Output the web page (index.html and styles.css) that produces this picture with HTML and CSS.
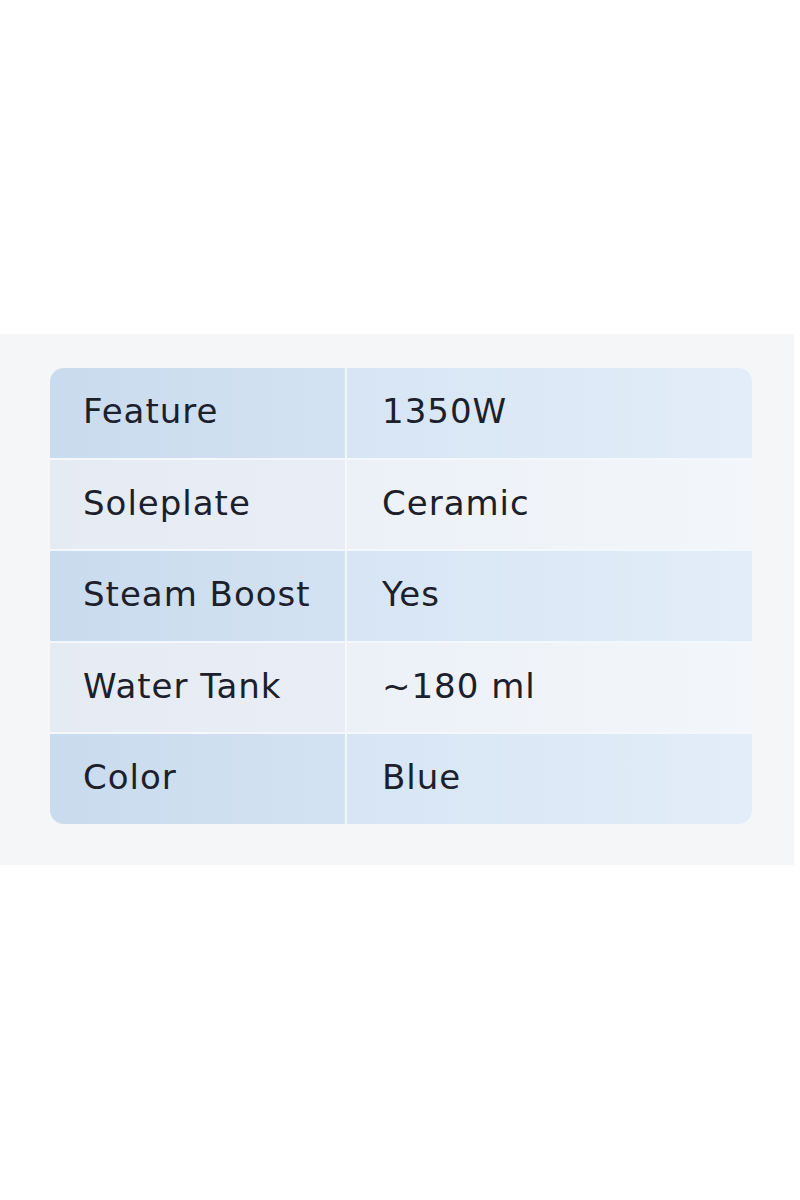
FILE: index.html
```html
<!DOCTYPE html>
<html>
<head>
<meta charset="utf-8">
<link rel="stylesheet" href="styles.css">
</head>
<body>
<div class="page">
  <div class="band">
    <div class="card">
      <div class="row blue"><div class="cell key">Feature</div><div class="cell val">1350W</div></div>
      <div class="row light"><div class="cell key">Soleplate</div><div class="cell val">Ceramic</div></div>
      <div class="row blue"><div class="cell key">Steam Boost</div><div class="cell val">Yes</div></div>
      <div class="row light"><div class="cell key">Water Tank</div><div class="cell val">~180 ml</div></div>
      <div class="row blue"><div class="cell key">Color</div><div class="cell val">Blue</div></div>
    </div>
  </div>
</div>
</body>
</html>
```
FILE: styles.css
```css
html, body {
  margin: 0;
  padding: 0;
  background: #ffffff;
}
.page {
  width: 800px;
  height: 1200px;
  padding-top: 334px;
  box-sizing: border-box;
}
.band {
  width: 794px;
  height: 531px;
  background: #f5f6f8;
  padding: 34px 0 0 50px;
  box-sizing: border-box;
}
.card {
  width: 702px;
  border-radius: 14px;
  overflow: hidden;
  display: flex;
  flex-direction: column;
  gap: 2px;
  background: #f4f7fb;
}
.row {
  display: grid;
  grid-template-columns: 295px 1fr;
  column-gap: 2px;
  height: 89.5px;
}
.row.blue .cell.key { background: linear-gradient(90deg, #c9dbee 0%, #d3e2f2 100%); }
.row.blue .cell.val { background: linear-gradient(90deg, #d7e5f4 0%, #e3edf9 100%); }
.row.light .cell.key { background: linear-gradient(90deg, #e5ebf3 0%, #e9eef6 100%); }
.row.light .cell.val { background: linear-gradient(90deg, #ecf1f7 0%, #f3f6fa 100%); }
.cell {
  display: flex;
  align-items: center;
  font-family: "DejaVu Sans", sans-serif;
  font-size: 34px;
  color: #1b202b;
  letter-spacing: 1px;
  padding-bottom: 3px;
  box-sizing: border-box;
}
.key { padding-left: 33px; }
.val { padding-left: 35px; }
```
